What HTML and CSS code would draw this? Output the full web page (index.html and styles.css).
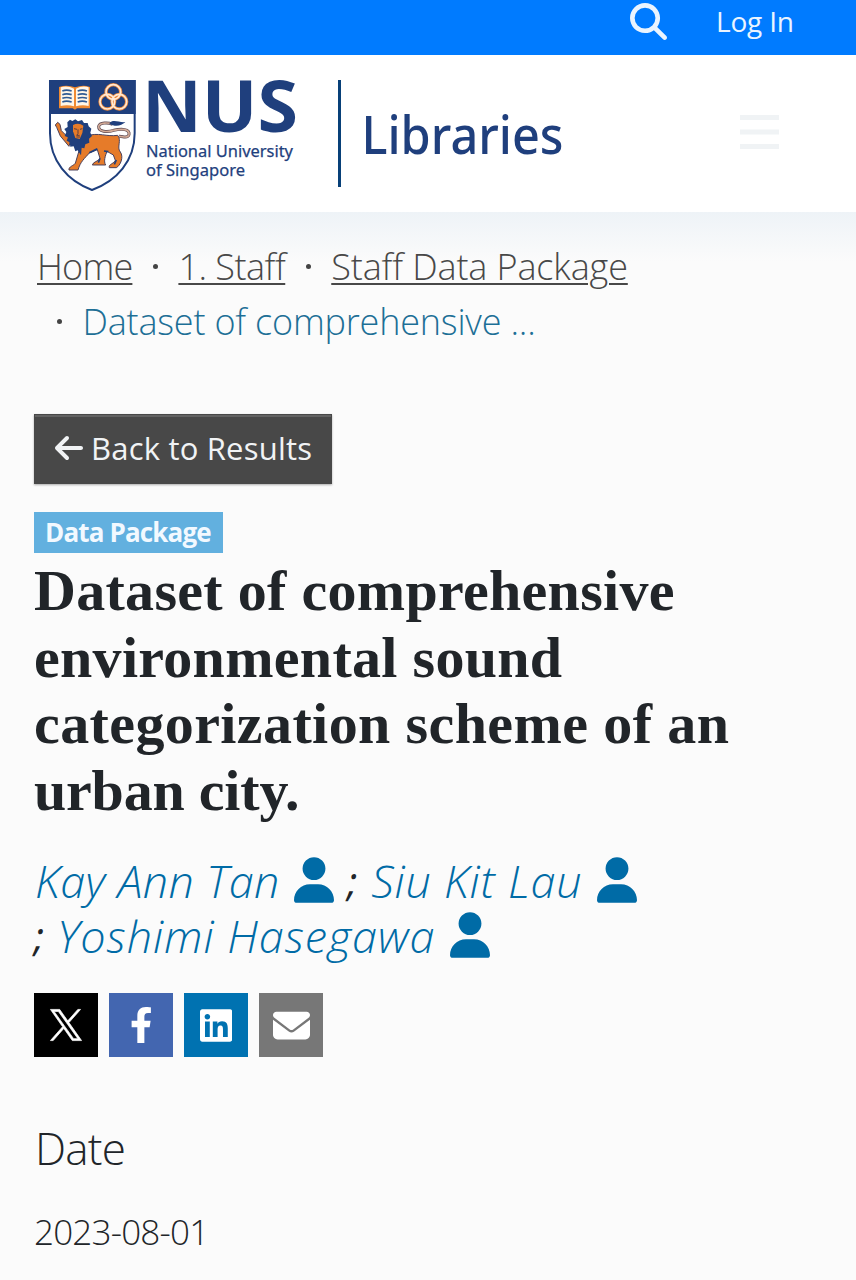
FILE: index.html
```html
<!DOCTYPE html>
<html lang="en">
<head>
<meta charset="utf-8">
<title>Dataset of comprehensive environmental sound categorization scheme of an urban city.</title>
<link rel="stylesheet" href="styles.css">
</head>
<body>
<svg class="sprite" aria-hidden="true">
  <symbol id="user" viewBox="0 0 448 512"><path d="M224 256A128 128 0 1 0 224 0a128 128 0 1 0 0 256zm-45.7 48C79.8 304 0 383.8 0 482.3C0 498.7 13.3 512 29.7 512H418.3c16.4 0 29.7-13.3 29.7-29.7C448 383.8 368.2 304 269.7 304H178.3z"/></symbol>
</svg>
<div class="topbar">
  <svg class="search" viewBox="0 0 512 512"><path d="M416 208c0 45.9-14.9 88.3-40 122.7L502.6 457.4c12.5 12.5 12.5 32.8 0 45.3s-32.8 12.5-45.3 0L330.7 376c-34.4 25.2-76.8 40-122.7 40C93.1 416 0 322.9 0 208S93.1 0 208 0S416 93.1 416 208zM208 352a144 144 0 1 0 0-288 144 144 0 1 0 0 288z"/></svg>
  <a class="login">Log In</a>
</div>
<header class="header">
  <svg class="logo" viewBox="0 0 540 126" width="540" height="126">
    <g transform="scale(.33333)">
      <path d="M15 15H269V172C269 255 215 315 141 342C68 315 15 255 15 172Z" fill="#fff" stroke="#1f3f7d" stroke-width="6"/>
      <path d="M12 12H272V114H12Z" fill="#1f3f7d"/>
      <path d="M42 33Q66 25 90 34Q114 25 135 33V97H96L90 101L83 97H42Z" fill="#f08a32"/>
      <path d="M47 34Q68 28 87 38V91Q68 85 47 90ZM93 38Q112 28 131 34V90Q112 85 93 91Z" fill="#fff6e8"/>
      <path d="M52 45q12-5 28 0M52 56q12-5 28 0M52 67q12-5 28 0M52 78q12-5 28 0M98 45q14-5 28 0M98 56q14-5 28 0M98 67q14-5 28 0M98 78q14-5 28 0" fill="none" stroke="#315b94" stroke-width="5"/>
      <g fill="none" stroke="#ee8a3c" stroke-width="10"><circle cx="205" cy="48" r="22"/><circle cx="187" cy="77" r="22"/><circle cx="223" cy="77" r="22"/></g>
      <g fill="none" stroke="#ffe9d4" stroke-width="5"><circle cx="205" cy="48" r="22"/><circle cx="187" cy="77" r="22"/><circle cx="223" cy="77" r="22"/></g>
      <path d="M203 173C172 176 153 161 162 147C173 135 189 146 208 150C226 156 245 145 253 159C260 175 235 182 206 176" fill="none" stroke="#5c4850" stroke-width="10" visibility="hidden"/>
      <path d="M203 145C190 139 164 139 161 151C160 168 187 169 206 163C229 158 255 158 252 176C248 190 233 180 222 181" fill="none" stroke="#5c4850" stroke-width="9"/>
      <path d="M203 145C190 139 164 139 161 151C160 168 187 169 206 163C229 158 255 158 252 176C248 190 233 180 222 181" fill="none" stroke="#d3aa96" stroke-width="5"/>
      <path d="M193 143C203 127 223 141 241 138C229 150 210 153 193 143Z" fill="#1f3f7d"/>
      <path d="M38 139L45 145L49 164L77 192L72 211L46 180L35 154L31 147Z" fill="#e67b29" stroke="#493f59" stroke-width="3"/>
      <path d="M126 180C158 168 186 183 218 178C231 193 214 214 226 228C237 243 226 269 214 275H193C190 265 204 265 211 253L205 237L186 226C181 239 175 256 182 267H142C145 256 160 257 165 247L157 221L133 231C119 247 106 257 99 282H72C70 272 86 269 91 262L103 221Z" fill="#e67b29" stroke="#493f59" stroke-width="3"/>
      <path d="M67 139L75 131L82 135L91 130L99 136L111 132L117 141L128 141L131 151L139 158L136 170L141 180L132 188L133 200L121 205L118 217L110 215L108 238L98 223L91 226L86 211L76 212L74 199L65 194L69 184L59 180L64 168L58 159L68 153Z" fill="#1f3f7d"/>
      <path d="M84 147Q101 138 115 149L112 171L104 189L91 186L84 166Z" fill="#e67b29"/>
      <path d="M87 158l9 2M105 160l7-2M99 160v13l-4 5h9M94 183h11" fill="none" stroke="#5b3d43" stroke-width="3"/>
      <path d="M133 230l24-12M177 225l13 2M165 247l-5 13M214 252l-6 13" stroke="#1f3f7d" stroke-width="5"/>
    </g>
    <g class="logo-text">
      <text class="nus" x="97" y="56" textLength="156" lengthAdjust="spacingAndGlyphs">NUS</text>
      <text class="small" x="101" y="80.500" textLength="147" lengthAdjust="spacingAndGlyphs">National University</text>
      <text class="small" x="101" y="99.500" textLength="99" lengthAdjust="spacingAndGlyphs">of Singapore</text>
      <text class="lib" x="316.500" y="78" textLength="202" lengthAdjust="spacingAndGlyphs">Libraries</text>
    </g>
    <path d="M293 4h3v107h-3z" fill="#084078"/>
  </svg>
  <svg class="menu" viewBox="0 0 40 36"><path d="M0 1h39v5H0zM0 15.500h39v5H0zM0 30h39v5H0z"/></svg>
</header>
<main class="main">
  <nav class="crumbs">
    <div class="crumb-row"><a class="c-home">Home</a><i class="dot"></i><a class="c-staff">1. Staff</a><i class="dot"></i><a class="c-package">Staff Data Package</a></div>
    <div class="crumb-row second"><i class="dot"></i><span class="current">Dataset of comprehensive ...</span></div>
  </nav>
  <button class="back"><svg viewBox="0 0 448 512"><path d="M9.400 233.400c-12.500 12.500-12.500 32.800 0 45.300l160 160c12.500 12.500 32.800 12.500 45.300 0s12.500-32.800 0-45.300L109.200 288 416 288c17.700 0 32-14.300 32-32s-14.300-32-32-32l-306.700 0L214.600 118.600c12.500-12.500 12.500-32.800 0-45.300s-32.800-12.500-45.300 0l-160 160z"/></svg><span>Back to Results</span></button>
  <div class="badge">Data Package</div>
  <h1><span class="t1">Dataset of comprehensive</span><br><span class="t2">environmental sound</span><br><span class="t3">categorization scheme of an</span><br><span class="t4">urban city.</span></h1>
  <div class="authors">
    <div class="author-row"><a class="a1">Kay Ann Tan</a><svg><use href="#user"/></svg><span class="semi s1">;</span><a class="a2">Siu Kit Lau</a><svg><use href="#user"/></svg></div>
    <div class="author-row"><span class="semi">;</span><a class="a3">Yoshimi Hasegawa</a><svg><use href="#user"/></svg></div>
  </div>
  <div class="share">
    <a class="x"><svg viewBox="0 0 24 24"><path d="M14.095 10.316L22.286 1h-1.940l-7.115 8.088L7.551 1H1l8.589 12.231L1 23h1.941l7.509-8.543L16.449 23H23L14.095 10.316zM11.437 13.338l-.872-1.218L3.641 2.432h2.981l5.590 7.821.868 1.219 7.265 10.166h-2.981l-5.927-8.300z"/></svg></a>
    <a class="fb"><svg viewBox="0 0 320 512"><path d="M279.140 288l14.220-92.660h-88.910v-60.130c0-25.350 12.420-50.060 52.240-50.060h40.420V6.260S260.430 0 225.360 0c-73.220 0-121.080 44.380-121.080 124.720v70.620H22.890V288h81.390v224h100.170V288z"/></svg></a>
    <a class="li"><svg viewBox="0 0 448 512"><path d="M416 32H31.900C14.300 32 0 46.500 0 64.300v383.400C0 465.500 14.300 480 31.900 480H416c17.600 0 32-14.500 32-32.300V64.300c0-17.800-14.400-32.300-32-32.300zM135.400 416H69V202.200h66.500V416zm-33.200-243c-21.300 0-38.500-17.300-38.500-38.500S80.900 96 102.200 96c21.200 0 38.500 17.300 38.500 38.500 0 21.300-17.200 38.500-38.500 38.500zm282.100 243h-66.400V312c0-24.800-.5-56.700-34.500-56.700-34.600 0-39.900 27-39.900 54.900V416h-66.400V202.200h63.700v29.200h.9c8.900-16.800 30.600-34.500 62.900-34.500 67.200 0 79.700 44.300 79.700 101.900V416z"/></svg></a>
    <a class="mail"><svg viewBox="0 0 512 512"><path d="M48 64C21.500 64 0 85.500 0 112c0 15.100 7.100 29.300 19.200 38.400L236.800 313.600c11.400 8.500 27 8.500 38.400 0L492.800 150.400c12.100-9.100 19.200-23.300 19.200-38.400c0-26.500-21.500-48-48-48H48zM0 176V384c0 35.300 28.700 64 64 64H448c35.300 0 64-28.700 64-64V176L294.400 339.200c-22.800 17.100-54 17.100-76.800 0L0 176z"/></svg></a>
  </div>
  <h2><span>Date</span></h2>
  <div class="date"><span>2023-08-01</span></div>
</main>
</body>
</html>
```
FILE: styles.css
```css
* { box-sizing: border-box; }
body { margin: 0; height: 1280px; overflow: hidden; background: #fbfbfb; color: #212529; font-family: "Open Sans", "Noto Sans", sans-serif; font-stretch: 88%; }
.sprite { display: none; }
.topbar { height: 55px; background: #007bff; display: flex; align-items: flex-start; color: #eaf4ff; }
.search { width: 37px; height: 37px; margin: 3px 0 0 630px; fill: #eaf4ff; }
.login { margin-left: 49px; font-size: 28px; line-height: 43px; letter-spacing: -.2px; white-space: nowrap; }
.header { height: 157px; background: #fff; display: flex; align-items: flex-start; padding: 21px 0 0 45px; }
.logo { flex: none; overflow: visible; }
.logo-text { fill: #1f3f7d; font-family: "Noto Sans", sans-serif; font-stretch: 100%; }
.nus { font-size: 71px; font-weight: 700; }
.small { font-size: 16.500px; font-weight: 400; stroke: #1f3f7d; stroke-width: .25px; }
.lib { font-size: 52px; font-weight: 500; }
.menu { width: 40px; height: 36px; margin: 38px 0 0 155px; fill: #f0f3f5; }
.main { padding: 27px 34px 0; height: 1068px; background: linear-gradient(#eef3f7, #fbfbfb 50px); }
.crumbs { font-size: 36px; font-weight: 300; line-height: 55px; color: #484848; }
.crumb-row { display: flex; padding-left: 3px; white-space: nowrap; height: 55px; }
.crumb-row a { text-decoration: underline; text-decoration-thickness: 2px; text-underline-offset: 3px; }
.c-home { letter-spacing: -.8px; }
.c-staff { letter-spacing: -.5px; }
.c-package { letter-spacing: -.13px; }
.dot { width: 5px; height: 5px; border-radius: 50%; background: #444; margin: 25px 20.500px 0; flex: none; }
.second .dot { margin-left: 20px; }
.current { color: #1d6f96; letter-spacing: -.2px; }
.back { display: flex; align-items: center; width: 298px; height: 70px; margin-top: 65px; padding: 0 0 3px 20px; border: 1px solid #484848; background: #484848; color: #f1f3f5; font: inherit; font-size: 31px; letter-spacing: .2px; box-shadow: inset 0 2px 0 #626262, 0 1px 2px #aaa; white-space: nowrap; }
.back svg { width: 28px; height: 32px; fill: #f1f3f5; margin-right: 8px; }
.badge { width: 189px; height: 41px; margin-top: 28px; padding-left: 11px; background: #62b0df; color: #f2f9ff; font-size: 26px; font-weight: 700; letter-spacing: -.85px; line-height: 40px; white-space: nowrap; }
h1 { margin: 5px 0 0; font: 700 58px/66.500px "Liberation Serif", serif; white-space: nowrap; color: #212529; }
.t1, .t2 { letter-spacing: .3px; }
.t3 { letter-spacing: .4px; }
.t4 { letter-spacing: -.2px; }
.authors { margin-top: 30px; font-size: 45px; font-style: italic; font-weight: 300; color: #006ba6; }
.author-row { display: flex; height: 55px; line-height: 53px; white-space: nowrap; }
.author-row svg { width: 40px; height: 46px; fill: #006ba6; margin: 3px 0 0 14.500px; flex: none; }
.a1 { padding-left: 1px; letter-spacing: .4px; }
.a2 { letter-spacing: .75px; }
.a3 { letter-spacing: .95px; }
.semi { color: #212529; font-size: 40px; font-weight: 400; width: 23px; }
.s1 { margin-left: 13px; width: 24px; }
.share { display: flex; gap: 11px; margin-top: 29px; }
.share a { width: 64px; height: 64px; display: flex; align-items: center; justify-content: center; }
.share svg { fill: #fff; }
.x { background: #000; }
.x svg { width: 34px; stroke: #fff; stroke-width: .5; }
.fb { background: #4366b0; }
.fb svg { height: 36px; }
.li { background: #0072b1; }
.li svg { height: 37px; }
.mail { background: #777; }
.mail svg { width: 37px; }
h2 { margin: 59px 0 0 1px; font-size: 44px; font-weight: 300; line-height: 64px; letter-spacing: -.8px; }
.date { margin-top: 20px; font-size: 35px; font-weight: 300; line-height: 64px; letter-spacing: -.8px; }
```
